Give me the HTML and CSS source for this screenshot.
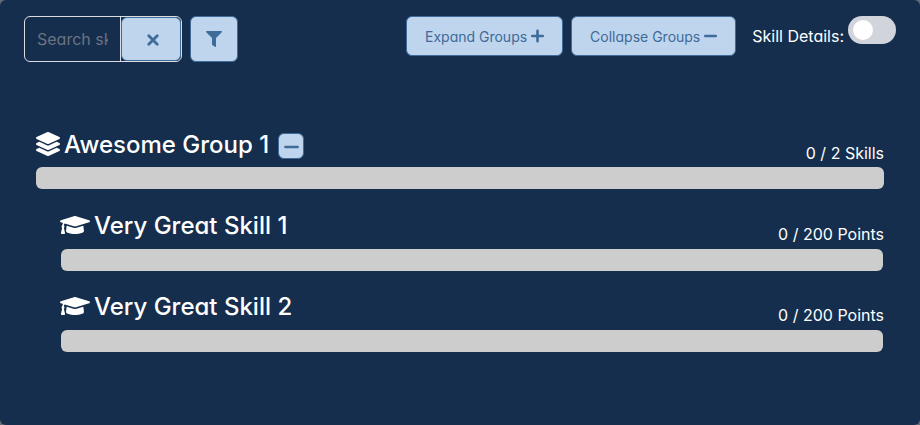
FILE: index.html
```html
<!DOCTYPE html>
<html lang="en">
<head>
<meta charset="utf-8">
<title>Skills</title>
<link rel="stylesheet" href="styles.css">
</head>
<body>
<main class="panel">
  <header class="toolbar">
    <div class="search">
      <input class="search-input" type="text" placeholder="Search skills" aria-label="Search skills">
      <button class="btn search-clear" aria-label="Clear"><svg width="12" height="12" viewBox="0 0 12 12"><path d="M1.8 1.8 10.2 10.2M10.2 1.8 1.8 10.2" fill="none" stroke="currentColor" stroke-width="2.8" stroke-linecap="round"/></svg></button>
    </div>
    <button class="btn filter" aria-label="Filter"><svg width="16" height="16" viewBox="0 0 512 512"><path fill="currentColor" d="M487.976 0H24.028C2.71 0-8.047 25.866 7.058 40.971L192 225.941V432c0 7.831 3.821 15.17 10.237 19.662l80 55.98C298.02 518.69 320 507.493 320 487.98V225.941l184.947-184.97C520.021 25.896 509.338 0 487.976 0z"/></svg></button>
    <div class="actions">
      <button class="btn action">Expand Groups<svg width="13" height="14" viewBox="0 0 13 14"><path d="M1.3 7H11.7M6.5 1.8V12.2" fill="none" stroke="currentColor" stroke-width="2.6" stroke-linecap="round"/></svg></button>
      <button class="btn action">Collapse Groups<svg width="13" height="14" viewBox="0 0 13 14"><path d="M1.3 7H11.7" fill="none" stroke="currentColor" stroke-width="2.6" stroke-linecap="round"/></svg></button>
      <span class="details-label">Skill Details:</span>
      <span class="switch" role="switch" aria-checked="false"><span class="knob"></span></span>
    </div>
  </header>

  <section class="group">
    <div class="row">
      <h2 class="title"><svg class="icon-layers" width="24" height="24" viewBox="0 0 512 512"><path fill="currentColor" d="M12.41 148.02l232.94 105.67c6.8 3.09 14.49 3.09 21.29 0l232.94-105.67c16.55-7.51 16.55-32.52 0-40.03L266.65 2.31a25.607 25.607 0 0 0-21.29 0L12.41 107.98c-16.55 7.51-16.55 32.53 0 40.04zm487.18 88.28l-58.09-26.33-161.64 73.27c-7.56 3.43-15.59 5.17-23.86 5.17s-16.29-1.74-23.86-5.17L70.51 209.97l-58.1 26.33c-16.55 7.5-16.55 32.5 0 40l232.94 105.59c6.8 3.08 14.49 3.08 21.29 0L499.59 276.3c16.55-7.5 16.55-32.5 0-40zm0 127.8l-57.87-26.23-161.86 73.37c-7.56 3.43-15.59 5.17-23.86 5.17s-16.29-1.74-23.86-5.17L70.29 337.87 12.41 364.1c-16.55 7.5-16.55 32.5 0 40l232.94 105.59c6.8 3.08 14.49 3.08 21.29 0L499.59 404.1c16.55-7.5 16.55-32.5 0-40z"/></svg>Awesome Group 1</h2>
      <button class="btn toggle" aria-label="Collapse"><svg width="15" height="4" viewBox="0 0 15 4"><path d="M1.4 2H13.6" fill="none" stroke="currentColor" stroke-width="2.6" stroke-linecap="round"/></svg></button>
      <span class="count">0 / 2 Skills</span>
    </div>
    <div class="bar"></div>
  </section>

  <section class="skill">
    <div class="row">
      <h2 class="title"><svg class="icon-cap" width="30" height="24" viewBox="0 0 640 512"><path fill="currentColor" d="M622.34 153.2L343.4 67.5c-15.2-4.67-31.6-4.67-46.79 0L17.66 153.2c-23.54 7.23-23.54 38.36 0 45.59l48.63 14.94c-10.67 13.19-17.23 29.28-17.88 46.9C38.78 266.15 32 276.11 32 288c0 10.78 5.68 19.85 13.86 25.65L20.33 428.53C18.11 438.52 25.71 448 35.94 448h56.11c10.24 0 17.84-9.48 15.62-19.47L82.14 313.65C90.32 307.85 96 298.78 96 288c0-11.57-6.47-21.25-15.66-26.87.76-15.02 8.44-28.3 20.69-36.72L296.6 284.5c9.06 2.78 26.44 6.25 46.79 0l278.95-85.7c23.55-7.24 23.55-38.36 0-45.6zM352.79 315.09c-28.53 8.76-52.84 3.92-65.59 0l-145.02-44.55L128 384c0 35.35 85.96 64 192 64s192-28.65 192-64l-14.18-113.47-145.03 44.56z"/></svg>Very Great Skill 1</h2>
      <span class="count">0 / 200 Points</span>
    </div>
    <div class="bar"></div>
  </section>

  <section class="skill">
    <div class="row">
      <h2 class="title"><svg class="icon-cap" width="30" height="24" viewBox="0 0 640 512"><path fill="currentColor" d="M622.34 153.2L343.4 67.5c-15.2-4.67-31.6-4.67-46.79 0L17.66 153.2c-23.54 7.23-23.54 38.36 0 45.59l48.63 14.94c-10.67 13.19-17.23 29.28-17.88 46.9C38.78 266.15 32 276.11 32 288c0 10.78 5.68 19.85 13.86 25.65L20.33 428.53C18.11 438.52 25.71 448 35.94 448h56.11c10.24 0 17.84-9.48 15.62-19.47L82.14 313.65C90.32 307.85 96 298.78 96 288c0-11.57-6.47-21.25-15.66-26.87.76-15.02 8.44-28.3 20.69-36.72L296.6 284.5c9.06 2.78 26.44 6.25 46.79 0l278.95-85.7c23.55-7.24 23.55-38.36 0-45.6zM352.79 315.09c-28.53 8.76-52.84 3.92-65.59 0l-145.02-44.55L128 384c0 35.35 85.96 64 192 64s192-28.65 192-64l-14.18-113.47-145.03 44.56z"/></svg>Very Great Skill 2</h2>
      <span class="count">0 / 200 Points</span>
    </div>
    <div class="bar"></div>
  </section>
</main>
</body>
</html>
```
FILE: styles.css
```css
* { box-sizing: border-box; }

body {
  margin: 0;
  background: #626a78;
  color: #fff;
  font: 400 16px/24px Inter, "Liberation Sans", sans-serif;
  font-feature-settings: "cv02", "cv03", "cv04", "cv11";
}

svg { display: block; flex: none; }

.panel {
  height: 425px;
  background: #152e4d;
  border-radius: 6px;
  padding: 16px 24px 0;
  overflow: hidden;
}

.toolbar { display: flex; align-items: flex-start; height: 46px; }

.btn {
  display: flex;
  align-items: center;
  justify-content: center;
  padding: 0;
  border: 1px solid #3e6b99;
  border-radius: 6px;
  background: #bfd5ed;
  color: #3e6b99;
  font: inherit;
  font-feature-settings: inherit;
}

.search {
  display: flex;
  width: 158px;
  height: 46px;
  border: 1px solid #dbdde3;
  border-radius: 6px;
}

.search-input {
  width: 96px;
  height: 44px;
  padding: 0 12px;
  border: 0;
  border-right: 1px solid #dbdde3;
  background: transparent;
  font: inherit;
  font-feature-settings: inherit;
  color: #fff;
}

.search-input::placeholder { color: #6b7280; opacity: 1; }

.search-clear { width: 60px; height: 44px; padding: 2px 0 0 4px; }

.filter { width: 48px; height: 46px; margin-left: 8px; }

.actions { display: flex; align-items: flex-start; margin-left: auto; }

.action { height: 40px; padding: 2px 18px 0 18px; gap: 4px; margin-right: 8px; font-size: 14px; }
.action svg { margin-top: -3px; }

.details-label { margin: 8px 4px 0 8px; }

.switch { width: 48px; height: 28px; border-radius: 14px; background: #d1d5db; padding: 4px 5px; }
.knob { display: block; width: 20px; height: 20px; border-radius: 50%; background: #fff; }

.group { margin: 69px 12px 0; }
.skill { margin: 22px 12px 0 36px; }
.group + .skill { margin-top: 23px; }

.row { display: flex; height: 36px; }

.title { display: flex; margin: 0; font-size: 24px; line-height: 28px; font-weight: 500; }
.icon-layers { margin: 1px 4px 0 0; }
.icon-cap { margin: 1px 4px 0 0; }

.toggle { width: 26px; height: 26px; margin: 2px 0 0 9px; }
.toggle svg { margin-top: 2px; }

.count { margin: 10px 0 0 auto; }

.bar { height: 22px; border-radius: 6px; background: #cdcdcd; }
.skill .bar { margin: 1px 1px 0; }
```
